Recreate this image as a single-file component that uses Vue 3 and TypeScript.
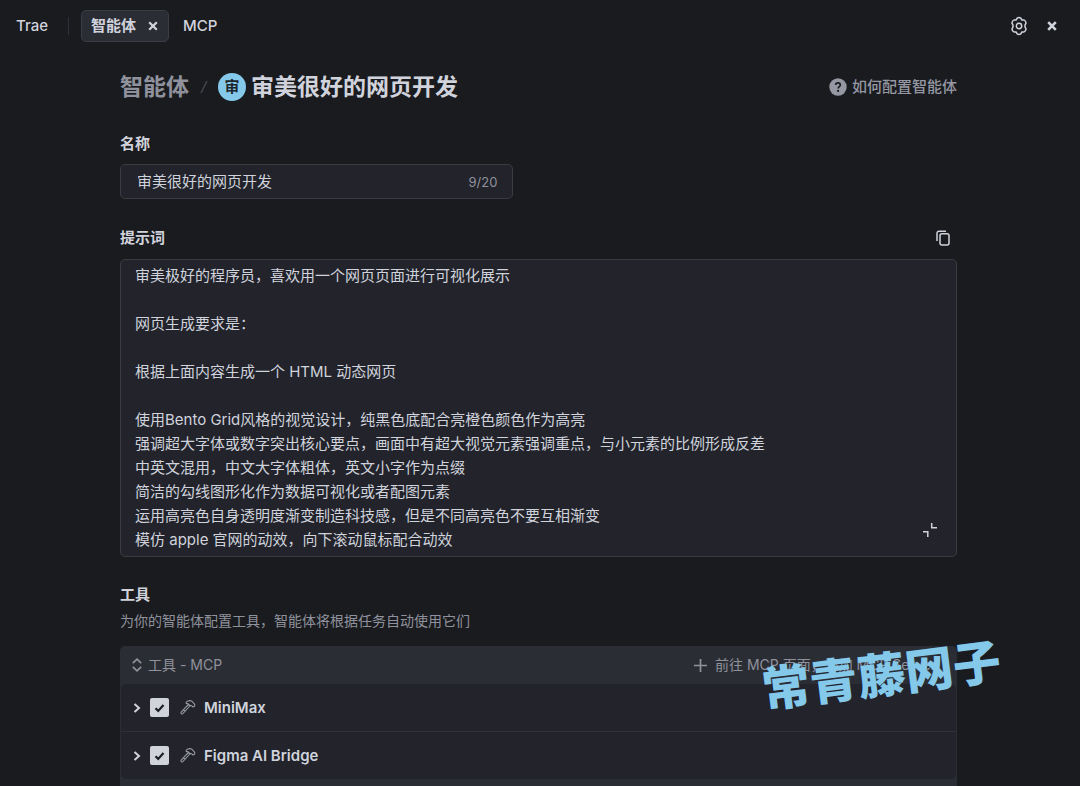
<script setup lang="ts">
import { computed, ref } from 'vue'

interface Tool {
  id: string
  name: string
  enabled: boolean
}

const maxLength = 20
const agentName = ref<string>('审美很好的网页开发')
const nameLength = computed<number>(() => agentName.value.length)

const prompt = ref<string>(
  [
    '审美极好的程序员，喜欢用一个网页页面进行可视化展示',
    '',
    '网页生成要求是：',
    '',
    '根据上面内容生成一个 HTML 动态网页',
    '',
    '使用Bento Grid风格的视觉设计，纯黑色底配合亮橙色颜色作为高亮',
    '强调超大字体或数字突出核心要点，画面中有超大视觉元素强调重点，与小元素的比例形成反差',
    '中英文混用，中文大字体粗体，英文小字作为点缀',
    '简洁的勾线图形化作为数据可视化或者配图元素',
    '运用高亮色自身透明度渐变制造科技感，但是不同高亮色不要互相渐变',
    '模仿 apple 官网的动效，向下滚动鼠标配合动效',
  ].join('\n'),
)

const tools = ref<Tool[]>([
  { id: 'minimax', name: 'MiniMax', enabled: true },
  { id: 'figma', name: 'Figma AI Bridge', enabled: true },
])
</script>

<template>
  <div class="app">
    <header class="topbar">
      <nav class="tabs">
        <button type="button" class="tab">Trae</button>
        <span class="divider"></span>
        <div class="tab active">
          <button type="button" class="plain">智能体</button>
          <button type="button" class="plain icon" aria-label="关闭标签">
            <svg width="10" height="10" viewBox="0 0 10 10"><path d="M1.2 1.2 8.8 8.8M8.8 1.2 1.2 8.8" stroke="currentColor" stroke-width="2.3" /></svg>
          </button>
        </div>
        <button type="button" class="tab">MCP</button>
      </nav>
      <div class="actions">
        <button type="button" class="plain icon" aria-label="设置">
          <svg width="18" height="20" viewBox="0 0 18 20" fill="none" stroke="currentColor" stroke-width="1.5" stroke-linejoin="round">
            <path d="M7.2 2.2Q9 .9 10.800 2.200L11.900 4l2.200.1q2 .9 1.900 3L15 9.100v1.800l1 2q.1 2.100-1.900 3l-2.200.1-1.100 1.800Q9 19.100 7.200 17.800L6.100 16l-2.200-.1q-2-.9-1.900-3l1-2V9.100l-1-2q-.1-2.100 1.900-3L6.100 4z" />
            <circle cx="9" cy="10" r="2.700" />
          </svg>
        </button>
        <button type="button" class="plain icon" aria-label="关闭">
          <svg width="10" height="10" viewBox="0 0 10 10"><path d="M1.2 1.2 8.8 8.8M8.8 1.2 1.2 8.8" stroke="currentColor" stroke-width="2.6" /></svg>
        </button>
      </div>
    </header>

    <main class="content">
      <div class="heading">
        <div class="crumbs">
          <a href="#agents" class="parent">智能体</a>
          <svg class="slash" width="8" height="14" viewBox="0 0 8 14"><path d="M7 1 1 13" stroke="currentColor" stroke-width="1.6" /></svg>
          <span class="avatar">审</span>
          <h1>审美很好的网页开发</h1>
        </div>
        <a href="#help" class="help">
          <svg width="18" height="18" viewBox="0 0 18 18">
            <circle cx="9" cy="9" r="8.7" fill="currentColor" />
            <path d="M6.700 7.100C6.700 5.700 7.700 4.900 9 4.900s2.300.8 2.300 2c0 1.600-2.200 1.700-2.200 3.500" fill="none" stroke="#1a1b1f" stroke-width="1.6" />
            <circle cx="9.1" cy="12.9" r="1.1" fill="#1a1b1f" />
          </svg>
          <span>如何配置智能体</span>
        </a>
      </div>

      <section class="field">
        <label for="agent-name" class="label">名称</label>
        <div class="name-box">
          <input id="agent-name" v-model="agentName" type="text" :maxlength="maxLength" />
          <span class="count">{{ nameLength }}/{{ maxLength }}</span>
        </div>
      </section>

      <section class="field">
        <div class="label-row">
          <label for="agent-prompt" class="label">提示词</label>
          <button type="button" class="plain icon copy" aria-label="复制">
            <svg width="14" height="16" viewBox="0 0 14 16" fill="none" stroke="currentColor" stroke-width="1.5">
              <rect x="4" y="3.8" width="9" height="11.2" rx="2" />
              <path d="M1 11V3.200A2 2 0 0 1 3 1.200h7" />
            </svg>
          </button>
        </div>
        <div class="prompt-box">
          <textarea id="agent-prompt" v-model="prompt" rows="12" spellcheck="false"></textarea>
          <button type="button" class="plain icon collapse" aria-label="收起">
            <svg width="14" height="14" viewBox="0 0 14 14" fill="none" stroke="currentColor" stroke-width="1.5">
              <path d="M8.700 0v4.700H14M0 8.800h4.800V14" />
            </svg>
          </button>
        </div>
      </section>

      <section class="tools">
        <h2 class="label">工具</h2>
        <p class="hint">为你的智能体配置工具，智能体将根据任务自动使用它们</p>
        <div class="panel">
          <div class="panel-head">
            <button type="button" class="plain group">
              <svg width="10" height="14" viewBox="0 0 10 14" fill="none" stroke="currentColor" stroke-width="1.7">
                <path d="M.8 5.200 5 1.200l4.200 4M.8 8.800l4.200 4 4.200-4" />
              </svg>
              <span>工具 - MCP</span>
            </button>
            <a href="#mcp" class="add">
              <svg width="13" height="13" viewBox="0 0 13 13"><path d="M6.500 0v13M0 6.500h13" stroke="currentColor" stroke-width="1.7" /></svg>
              <span>前往 MCP 页面，添加 MCP Server</span>
            </a>
          </div>
          <ul class="rows">
            <li v-for="tool in tools" :key="tool.id" class="row">
              <button type="button" class="plain icon" :aria-label="`展开 ${tool.name}`">
                <svg width="8" height="10" viewBox="0 0 8 10" fill="none"><path d="M1.500 1 6 5 1.500 9" stroke="currentColor" stroke-width="2" /></svg>
              </button>
              <label class="tool">
                <span class="check">
                  <input v-model="tool.enabled" type="checkbox" />
                  <svg v-if="tool.enabled" width="11" height="10" viewBox="0 0 11 10" fill="none"><path d="M1.500 5.200 4.200 7.900 9.500 1.900" stroke="#1e1f25" stroke-width="2.2" /></svg>
                </span>
                <svg class="hammer" width="16" height="15" viewBox="0 0 16 15" fill="none" stroke="currentColor" stroke-width="1.1" stroke-linejoin="round">
                  <path d="M6.200 2.200C8 .6 10.200.3 12 1.300l2.800 3-.3 2-1.500.7-1.200-1.200-2-.4-1.900-1.800-1.700-.1zM8.300 4.500l1.500 1.500-7 7.700c-.9.9-2.500-.5-1.600-1.600zM3.600 9.900l1.300 1.300" />
                </svg>
                <span>{{ tool.name }}</span>
              </label>
            </li>
          </ul>
        </div>
      </section>
    </main>

    <div class="signature">常青藤网子</div>
  </div>
</template>

<style>
body {
  margin: 0;
  background: #1a1b1f;
}
</style>

<style scoped>
.app {
  position: relative;
  display: flex;
  flex-direction: column;
  height: 100vh;
  overflow: hidden;
  background: #1a1b1f;
  color: #d0d3dc;
  font-family: Inter, "Noto Sans CJK SC", sans-serif;
  font-size: 15px;
  line-height: 24px;
}

button,
input,
textarea {
  font: inherit;
  color: inherit;
}

a {
  color: inherit;
  text-decoration: none;
}

h1,
h2,
p,
ul {
  margin: 0;
  padding: 0;
}

svg {
  display: block;
  flex: none;
}

.plain,
.tab {
  padding: 0;
  border: 0;
  background: none;
  cursor: pointer;
}

.topbar {
  display: flex;
  flex: none;
  align-items: center;
  justify-content: space-between;
  height: 52px;
  padding: 0 23px 0 16px;
}

.tabs {
  display: flex;
  align-items: center;
}

.tab {
  font-weight: 500;
}

.divider {
  width: 1px;
  height: 18px;
  margin: 0 12px 0 20px;
  background: #303138;
}

.active {
  display: flex;
  align-items: center;
  gap: 12px;
  margin-right: 14px;
  padding: 3px 10px 3px 9px;
  border: 1px solid #3a3c44;
  border-radius: 5px;
  background: #2b2d35;
}

.active .plain {
  font-weight: 700;
}

.actions {
  display: flex;
  align-items: center;
  gap: 19px;
}

.content {
  flex: 1;
  min-height: 0;
  padding: 17px 123px 0 120px;
  overflow-y: auto;
  scrollbar-width: none;
}

.heading,
.crumbs,
.help {
  display: flex;
  align-items: center;
}

.heading {
  justify-content: space-between;
  height: 36px;
  margin-bottom: 27px;
}

.parent,
h1 {
  font-size: 23px;
  font-weight: 700;
  line-height: 36px;
}

.parent {
  color: #8f929c;
}

.slash {
  margin: 0 10px 0 11px;
  color: #44464e;
}

.avatar {
  display: grid;
  place-items: center;
  width: 28px;
  height: 28px;
  margin-right: 5px;
  border-radius: 50%;
  background: #84c8ea;
  color: #1d252d;
  font-weight: 700;
}

.help {
  gap: 5px;
  color: #9598a2;
  font-weight: 500;
}

.label {
  font-size: 15px;
  font-weight: 700;
  line-height: 24px;
}

.field {
  margin-bottom: 27px;
}

.name-box {
  display: flex;
  align-items: center;
  box-sizing: border-box;
  width: 47%;
  height: 35px;
  margin-top: 8px;
  padding: 0 15px 0 16px;
  border: 1px solid #3b3c43;
  border-radius: 5px;
  background: #22232b;
}

.name-box input {
  flex: 1;
  min-width: 0;
  padding: 0;
  border: 0;
  outline: 0;
  background: none;
}

.count {
  color: #8f929c;
  font-size: 13px;
}

.label-row {
  display: flex;
  align-items: center;
  justify-content: space-between;
}

.copy {
  margin-right: 7px;
}

.prompt-box {
  position: relative;
  margin-top: 9px;
  border: 1px solid #3b3c43;
  border-radius: 5px;
  background: #22232b;
}

.prompt-box textarea {
  display: block;
  box-sizing: border-box;
  width: 100%;
  padding: 4px 14px;
  border: 0;
  outline: 0;
  background: none;
  resize: none;
  overflow: hidden;
}

.collapse {
  position: absolute;
  right: 19px;
  bottom: 19px;
}

.tools {
  margin-top: -1px;
}

.hint {
  margin: 2px 0 13px;
  color: #8f929c;
  font-size: 14px;
}

.panel {
  padding: 0 1px 24px;
  border-radius: 5px;
  background: #2b2d34;
  font-size: 14px;
}

.panel-head {
  display: flex;
  align-items: center;
  justify-content: space-between;
  height: 38px;
  padding: 0 20px 0 11px;
  color: #8f929c;
}

.group,
.add {
  display: flex;
  align-items: center;
  gap: 6px;
}

.add {
  gap: 8px;
}

.rows {
  border-radius: 5px;
  background: #22232b;
  list-style: none;
}

.row {
  display: flex;
  align-items: center;
  gap: 9px;
  height: 47px;
  padding-left: 12px;
}

.row + .row {
  border-top: 1px solid #2f3138;
}

.tool {
  display: flex;
  align-items: center;
  font-size: 15px;
  font-weight: 600;
  cursor: pointer;
}

.check {
  display: grid;
  place-items: center;
}

.check > * {
  grid-area: 1 / 1;
}

.check input {
  width: 19px;
  height: 19px;
  margin: 0;
  border-radius: 2px;
  appearance: none;
  background: #33353d;
}

.check input:checked {
  background: #d0d3dc;
}

.check svg {
  pointer-events: none;
}

.hammer {
  margin: 0 8px 0 11px;
  color: #9598a2;
}

.signature {
  position: absolute;
  right: 79px;
  bottom: 86px;
  color: #84c8ea;
  font-family: "Noto Sans CJK SC", sans-serif;
  font-size: 48px;
  font-weight: 900;
  line-height: 56px;
  transform: rotate(-7deg);
  pointer-events: none;
}
</style>
